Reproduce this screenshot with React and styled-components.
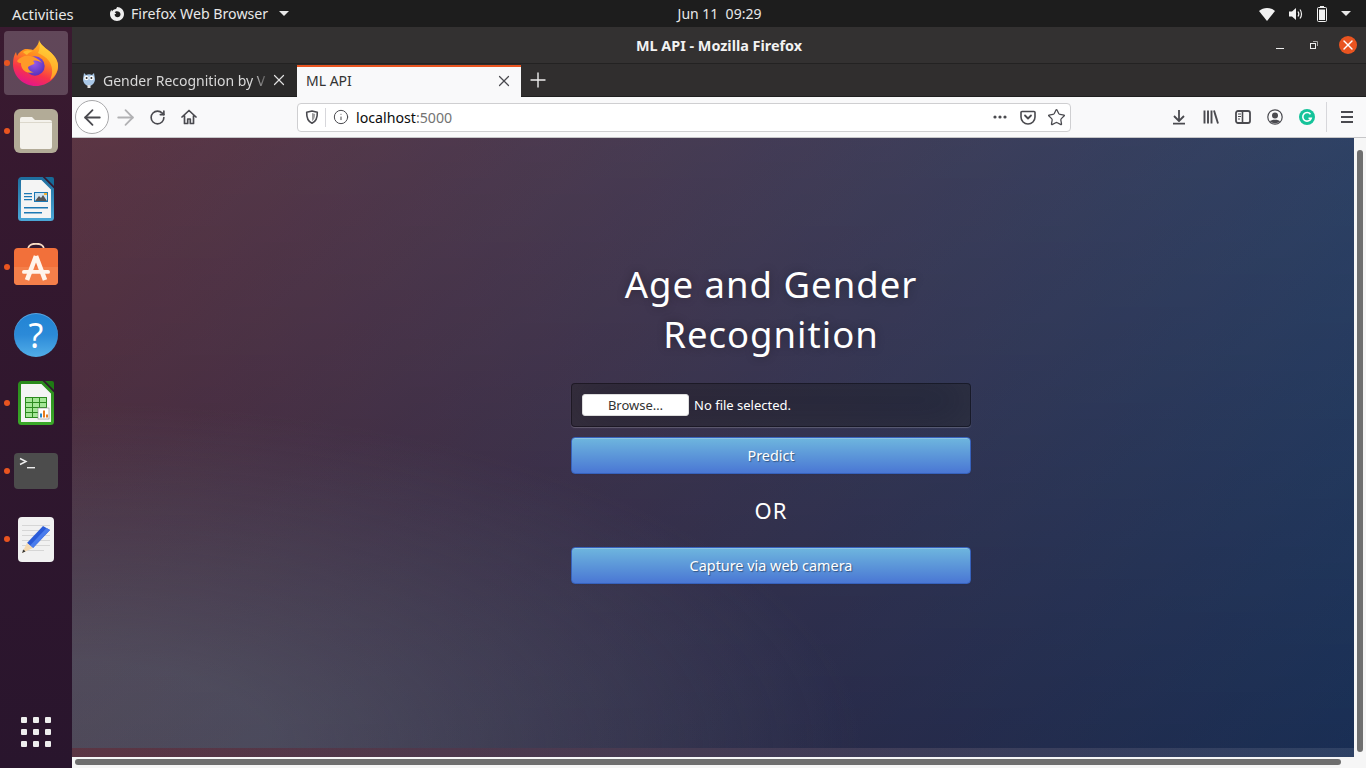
import React from 'react';
import styled, { createGlobalStyle } from 'styled-components';
import { ArrowLeft, ArrowRight, RotateCw, Info, Star, X, Plus } from 'lucide-react';

const uiFont = '"Noto Sans", "Open Sans", "DejaVu Sans", sans-serif';

const GlobalStyle = createGlobalStyle`
  html, body {
    margin: 0;
    padding: 0;
    background: #333;
    overflow: hidden;
  }
  * { box-sizing: border-box; }
`;

const Screen = styled.div`
  width: 1366px;
  height: 768px;
  display: flex;
  flex-direction: column;
  overflow: hidden;
  font-family: ${uiFont};
`;

/* gnome top bar */
const TopBar = styled.div`
  height: 27px;
  flex: none;
  background: #1d1d1d;
  color: #e8e8e8;
  font-size: 14.2px;
  display: grid;
  grid-template-columns: 677px 85px 1fr;
  align-items: center;
`;

const TopLeft = styled.div`
  display: flex;
  align-items: center;
  padding-left: 12px;
`;

const Activities = styled.span`
  width: 62px;
  font-size: 14.8px;
  white-space: nowrap;
`;

const AppMenu = styled.div`
  display: flex;
  align-items: center;
  gap: 6px;
  margin-left: 35px;
`;

const Caret = styled.span`
  width: 0;
  height: 0;
  margin-left: 5px;
  border-left: 5px solid transparent;
  border-right: 5px solid transparent;
  border-top: 5px solid #e8e8e8;
`;

const StatusCaret = styled(Caret)`
  margin-left: 1px;
`;

const Clock = styled.div`
  white-space: pre;
  text-align: center;
  font-size: 14px;
`;

const TopRight = styled.div`
  display: flex;
  align-items: center;
  justify-content: flex-end;
  gap: 13px;
  padding-right: 15px;
`;

const Desktop = styled.div`
  flex: 1;
  display: flex;
  min-height: 0;
`;

/* launcher */
const Dock = styled.div`
  width: 72px;
  flex: none;
  display: flex;
  flex-direction: column;
  padding-top: 2px;
  background: linear-gradient(180deg, #3a1a30 0%, #30172e 50%, #29152d 100%);
`;

const DockItem = styled.div`
  position: relative;
  height: 68px;
  display: flex;
  align-items: center;
  justify-content: center;

  &::before {
    content: '';
    position: absolute;
    inset: 2px 4px;
    border-radius: 4px;
    background: ${p => (p.$active ? 'rgba(255,255,255,0.2)' : 'transparent')};
  }

  &::after {
    content: '';
    position: absolute;
    left: 4px;
    top: 31px;
    width: 6px;
    height: 6px;
    border-radius: 50%;
    background: ${p => (p.$running ? '#e95420' : 'transparent')};
  }

  svg { position: relative; }
`;

const HelpBadge = styled.div`
  width: 44px;
  height: 44px;
  display: flex;
  align-items: center;
  justify-content: center;
  border-radius: 50%;
  color: #fff;
  font-size: 34px;
  line-height: 44px;
  background: linear-gradient(180deg, #2184d4 0%, #2c8ad8 50%, #52aee8 100%);
  box-shadow: inset 0 1px 0 rgba(255,255,255,.25);
`;

const AppsGrid = styled.div`
  margin-top: auto;
  margin-bottom: 21px;
  margin-left: 21px;
  display: grid;
  grid-template-columns: repeat(3, 6px);
  grid-auto-rows: 6px;
  gap: 6px;
`;

const AppsDot = styled.span`
  background: #eee;
  border-radius: 1px;
`;

/* browser window */
const Browser = styled.div`
  flex: 1;
  min-width: 0;
  display: flex;
  flex-direction: column;
`;

const TitleBar = styled.div`
  height: 37px;
  flex: none;
  position: relative;
  display: flex;
  align-items: center;
  justify-content: center;
  background: #333131;
  border-bottom: 1px solid #232222;
  color: #f2f2f2;
  font-size: 14.4px;
  font-weight: 700;
`;

const WindowButtons = styled.div`
  position: absolute;
  right: 9px;
  top: 9px;
  display: flex;
  align-items: center;
`;

const WindowButton = styled.div`
  width: 34px;
  height: 18px;
  display: flex;
  align-items: center;
  justify-content: center;
`;

const CloseButton = styled.div`
  width: 18px;
  height: 18px;
  margin-left: 8px;
  border-radius: 50%;
  background: #e95420;
  display: flex;
  align-items: center;
  justify-content: center;
`;

const TabStrip = styled.div`
  height: 33px;
  flex: none;
  display: flex;
  background: #302e2e;
  align-items: stretch;
  border-bottom: 1px solid #1f1f1f;
`;

const Tab = styled.div`
  width: ${p => p.$width}px;
  display: flex;
  align-items: center;
  padding: ${p => (p.$active ? '0 8px 3px 9px' : '0 9px 0 9px')};
  font-size: 14px;
  position: relative;
  color: ${p => (p.$active ? '#333' : '#d8d8d8')};
  background: ${p => (p.$active ? '#f9f9fa' : '#2b2a2a')};
  border-top: ${p => (p.$active ? '2px solid #e95420' : '0')};
  margin-top: ${p => (p.$active ? '1px' : '0')};
  margin-bottom: ${p => (p.$active ? '-1px' : '0')};
`;

const TabTitle = styled.span`
  flex: 1;
  min-width: 0;
  white-space: nowrap;
  margin-left: ${p => p.$indent || 0}px;
  mask-image: ${p => (p.$fade ? 'linear-gradient(90deg, #000 150px, rgba(0,0,0,.25) 163px)' : 'none')};
`;

const NewTab = styled.div`
  width: 34px;
  display: flex;
  align-items: center;
  justify-content: center;
`;

const Toolbar = styled.div`
  height: 41px;
  flex: none;
  display: flex;
  align-items: center;
  padding-left: 3px;
  background: #f9f9fa;
  border-bottom: 1px solid #c6c6c8;
  color: #4a4a4f;
`;

const ToolButton = styled.div`
  width: 32px;
  height: 32px;
  flex: none;
  display: flex;
  align-items: center;
  justify-content: center;
  color: ${p => (p.$disabled ? '#b1b1b3' : '#4a4a4f')};
`;

const BackButton = styled(ToolButton)`
  width: 34px;
  height: 34px;
  border-radius: 50%;
  background: #fff;
  border: 1px solid #a8a8aa;
`;

const UrlBar = styled.div`
  width: 774px;
  height: 29px;
  margin-left: 92px;
  flex: none;
  display: flex;
  align-items: center;
  background: #fff;
  border: 1px solid #cfcfd1;
  border-radius: 4px;
  font-size: 14.2px;
  color: #0c0c0d;
`;

const UrlIcon = styled.div`
  width: ${p => p.$width || 28}px;
  height: 100%;
  flex: none;
  display: flex;
  align-items: center;
  justify-content: center;
  color: #4a4a4f;
`;

const UrlDivider = styled.span`
  width: 1px;
  height: 19px;
  background: #d7d7db;
`;

const UrlText = styled.div`
  flex: 1;
  padding-left: 1px;
`;

const UrlPort = styled.span`
  color: #737373;
`;

const ToolRight = styled.div`
  margin-left: auto;
  display: flex;
  align-items: center;
  padding-right: 3px;
`;

const ToolDivider = styled.span`
  width: 1px;
  height: 30px;
  margin: 0 4px 0 3px;
  background: #d7d7db;
`;

/* page viewport with its two scrollbars */
const Viewport = styled.div`
  flex: 1;
  min-height: 0;
  display: grid;
  grid-template-columns: 1fr 12px;
  grid-template-rows: 1fr 11px;
  background: #f6f6f6;
`;

const PageClip = styled.div`
  overflow: hidden;
  min-width: 0;
  min-height: 0;
`;

const Page = styled.div`
  width: 1398px;
  height: 619px;
  padding-top: 121px;
  background:
    radial-gradient(ellipse farthest-corner at 0% 100%, rgba(104,128,138,.4) 10%, rgba(138,114,76,0) 40%),
    linear-gradient(to bottom, rgba(57,173,219,.25) 0%, rgba(42,60,87,.4) 100%),
    linear-gradient(135deg, #670d10 0%, #092756 100%);
  background-size: 1398px 610px;
`;

const Login = styled.div`
  width: 400px;
  margin: 0 auto;
  display: flex;
  flex-direction: column;
`;

const Heading = styled.h1`
  margin: 0 0 24px;
  color: #fff;
  font-size: 36.5px;
  font-weight: 400;
  line-height: 50px;
  letter-spacing: 1px;
  text-align: center;
  text-shadow: 0 0 10px rgba(0,0,0,.3);
`;

const FileBox = styled.div`
  height: 44px;
  margin-bottom: 10px;
  padding: 0 10px;
  display: flex;
  align-items: center;
  gap: 5px;
  color: #fff;
  font-size: 13px;
  background: rgba(0,0,0,.3);
  border: 1px solid rgba(0,0,0,.3);
  border-radius: 4px;
  box-shadow: inset 0 -5px 45px rgba(100,100,100,.2), 0 1px 1px rgba(255,255,255,.2);
`;

const BrowseButton = styled.div`
  width: 107px;
  height: 22px;
  display: flex;
  align-items: center;
  justify-content: center;
  color: #333;
  background: #fff;
  border: 1px solid #ddd;
  border-radius: 3px;
`;

const PrimaryButton = styled.div`
  height: 37px;
  display: flex;
  align-items: center;
  justify-content: center;
  color: #fff;
  font-size: 14.4px;
  text-shadow: 1px 1px 1px rgba(0,0,0,.4);
  background: linear-gradient(to bottom, #6eb6de, #4a77d4);
  border: 1px solid #3762bc;
  border-radius: 4px;
  box-shadow: inset 0 1px 0 rgba(255,255,255,.2), 0 1px 2px rgba(0,0,0,.05);
`;

const OrLabel = styled.div`
  height: 73px;
  padding-bottom: 2px;
  display: flex;
  align-items: center;
  justify-content: center;
  color: #fff;
  font-size: 22px;
  letter-spacing: 1px;
`;

const ScrollTrackV = styled.div`
  padding: 12px 3px 5px;
`;

const ScrollTrackH = styled.div`
  padding: 2px 13px 3px 3px;
`;

const ScrollThumb = styled.div`
  width: 100%;
  height: 100%;
  border-radius: 3px;
  background: #6f6f6f;
`;

const ScrollCorner = styled.div``;

/* icons */
const Svg = ({ size = 16, children, ...rest }) => (
  <svg width={size} height={size} viewBox="0 0 16 16" fill="none" {...rest}>{children}</svg>
);

const FirefoxLogo = () => (
  <svg width="46" height="46" viewBox="0 0 46 46">
    <defs>
      <linearGradient id="ffBody" x1="0.75" y1="0" x2="0.35" y2="1">
        <stop offset="0" stopColor="#ffc42e" />
        <stop offset="0.4" stopColor="#ff8a1f" />
        <stop offset="0.72" stopColor="#f8344a" />
        <stop offset="1" stopColor="#e3148e" />
      </linearGradient>
      <linearGradient id="ffSide" x1="0.5" y1="0" x2="0.3" y2="1">
        <stop offset="0" stopColor="#ffd83d" />
        <stop offset="1" stopColor="#ff9a20" />
      </linearGradient>
      <radialGradient id="ffGlobe" cx="0.45" cy="0.35" r="0.75">
        <stop offset="0" stopColor="#9a5ce8" />
        <stop offset="1" stopColor="#4f2bb5" />
      </radialGradient>
    </defs>
    <path d="M26 0c1 4 5 7 10 11 5 4 9 9 9 15 0 11-10 20-22 20C10 46 0 36 0 24c0-5 1-9 3-12l1 4c2-4 5-6 8-7 3 0 6 0 8 1 4-3 6-7 6-10z" fill="url(#ffBody)" />
    <path d="M26 0c1 4 5 7 10 11 5 4 9 9 9 15 0 5-3 11-8 14 3-6 3-13-1-19-3-4-7-6-11-8 2-3 2-9 1-13z" fill="url(#ffSide)" />
    <circle cx="22" cy="26" r="9.700" fill="url(#ffGlobe)" />
    <path d="M4 21c3-4 8-6 13-5 5 1 10 4 12 7-3-2-6-3-9-2 1 1 2 2 1 3-2 1-5 2-6 3 0 3 3 5 6 5-5 2-10 0-12-4-1-2-1-4-1-5-1 0-3 0-4-2z" fill="#ff9a28" />
    <path d="M10 12c3-2 7-2 10-1-3 1-5 2-6 4-2-1-3-2-4-3z" fill="#ffb92e" />
  </svg>
);

const FilesIcon = () => (
  <svg width="44" height="44" viewBox="0 0 44 44">
    <rect width="44" height="44" rx="6" fill="#b2ab97" />
    <path d="M6 10a2 2 0 0 1 2-2h10l3 3h15a2 2 0 0 1 2 2v25a2 2 0 0 1-2 2H8a2 2 0 0 1-2-2z" fill="#f4f2ec" />
    <rect x="6" y="13" width="32" height="1" fill="#dcd8cc" />
  </svg>
);

const DocShape = ({ id, top, bottom, fold, children }) => (
  <svg width="36" height="44" viewBox="0 0 36 44">
    <defs>
      <linearGradient id={id} x1="0" y1="0" x2="0" y2="1">
        <stop offset="0" stopColor={top} />
        <stop offset="1" stopColor={bottom} />
      </linearGradient>
    </defs>
    <path d="M3.500 1.500h20.500l10.500 10.500v28.500a2 2 0 0 1-2 2H3.500a2 2 0 0 1-2-2V3.500a2 2 0 0 1 2-2z" fill="#f4f4f4" stroke={`url(#${id})`} strokeWidth="3" />
    <path d="M27 0h7a2 2 0 0 1 2 2v7z" fill={fold} />
    {children}
  </svg>
);

const WriterIcon = () => (
  <DocShape id="writerEdge" top="#1f6f9f" bottom="#4aa6d6" fold="#176a98">
    <path d="M6 16h8v1.300H6zM6 19h8v1.300H6zM6 22h8v1.300H6zM6 30h24v1.600H6zM6 35h18v1.600H6z" fill="#1c78b4" />
    <rect x="16.500" y="15.500" width="13" height="9" fill="#cfe3f0" stroke="#1c78b4" />
    <path d="M17 24l4-5 2 2 2-3 4 6z" fill="#555" />
    <rect x="26" y="16" width="3" height="2" fill="#f0b030" />
  </DocShape>
);

const CalcIcon = () => (
  <DocShape id="calcEdge" top="#2a8a1c" bottom="#3aa828" fold="#1f7a14">
    <rect x="7.500" y="16.500" width="21" height="20" fill="#a4e696" stroke="#2b8a1e" />
    <path d="M7 21.500h21M7 26.500h21M7 31.500h21M14.500 16v20M21.500 16v20" stroke="#2b8a1e" />
    <rect x="20" y="27" width="11" height="11" fill="#fff" stroke="#888" strokeWidth="0.6" />
    <path d="M25 36.500v-7h2v7zM28 36.500v-3h2v3z" fill="#e77c1e" />
    <path d="M22 36.500v-4h2v4z" fill="#2b88c8" />
  </DocShape>
);

const StoreIcon = () => (
  <svg width="44" height="48" viewBox="0 0 44 48">
    <path d="M14 7V6c0-7 16-7 16 0v1" fill="none" stroke="#f9dcc4" strokeWidth="2" />
    <rect y="5" width="44" height="37" rx="4" fill="#f2703a" />
    <path d="M0 24h44v14a4 4 0 0 1-4 4H4a4 4 0 0 1-4-4z" fill="#f47f4a" />
    <path d="M22 13L13 37M22 13l9 24" stroke="#fff4ec" strokeWidth="4.600" />
    <rect x="8" y="27" width="28" height="3.800" rx="1.900" fill="#fff4ec" />
  </svg>
);

const TerminalIcon = () => (
  <svg width="44" height="36" viewBox="0 0 44 36">
    <rect width="44" height="36" rx="4" fill="#4c4c4c" />
    <path d="M6 5.500l6 3-6 3" fill="none" stroke="#eee" strokeWidth="1.400" />
    <rect x="13" y="14" width="8" height="1.400" fill="#eee" />
  </svg>
);

const GeditIcon = () => (
  <svg width="36" height="45" viewBox="0 0 36 45">
    <rect width="36" height="45" rx="4" fill="#f1f1f1" />
    <path d="M4 8.500h28M4 13.500h28M4 18.500h28M4 23.500h28M4 28.500h28M4 33.500h22" stroke="#d6d6d6" />
    <path d="M32 13L25 9 9 26l6 5z" fill="#2a5bd8" />
    <path d="M32 13L15 31l-3-2.500L28.500 11z" fill="#4a7cec" />
    <path d="M9 26l6 5-11 5z" fill="#f4d9b0" />
    <path d="M4 36l1.500-3.500 2 2z" fill="#333" />
  </svg>
);

const OwlFavicon = () => (
  <svg width="16" height="16" viewBox="0 0 16 16">
    <path d="M3 1l2 2c2-1 4-1 6 0l2-2 1 6c0 4-3 7-6 7s-6-3-6-7z" fill="#a9c7e6" />
    <circle cx="5.400" cy="6" r="2.300" fill="#fff" />
    <circle cx="10.600" cy="6" r="2.300" fill="#fff" />
    <circle cx="5.600" cy="6" r="1" fill="#333" />
    <circle cx="10.400" cy="6" r="1" fill="#333" />
    <rect x="6.500" y="13" width="3" height="3" fill="#ddd" />
  </svg>
);

const MiniFirefox = () => (
  <Svg size={16}>
    <path d="M8 1c3.900 0 7 3.100 7 7s-3.100 7-7 7-7-3.100-7-7c0-1.600.5-3 1.400-4.200L3 5.500C3.700 4 5.300 3 7 3c.6-.6.8-1.300 1-2zM8 5.300c-1 0-1.800.5-2.300 1.200 1 .2 1.500.6 1.500 1.100-.5.3-1.200.4-1.700.9.2 1.600 1.400 2.700 3 2.700 1.700 0 3-1.300 3-3S9.700 5.300 8 5.300z" fill="#eee" fillRule="evenodd" />
  </Svg>
);

const WifiIcon = () => (
  <Svg size={16}>
    <path d="M0 5c4.500-4 11.500-4 16 0l-8 10z" fill="#f2f2f2" />
  </Svg>
);

const VolumeIcon = () => (
  <Svg size={16}>
    <path d="M1 5.500h3L8 2v12L4 10.500H1z" fill="#f2f2f2" />
    <path d="M10 5.500c1 1.500 1 3.500 0 5M12 3.500c2 2.500 2 6.500 0 9" stroke="#f2f2f2" strokeWidth="1.200" />
  </Svg>
);

const BatteryIcon = () => (
  <svg width="10" height="16" viewBox="0 0 10 16">
    <rect x="3" y="0" width="4" height="2" fill="#f2f2f2" />
    <rect x="0.500" y="1.500" width="9" height="14" rx="1" fill="none" stroke="#f2f2f2" />
    <rect x="2" y="3.500" width="6" height="10.500" fill="#f2f2f2" />
  </svg>
);

const ShieldIcon = () => (
  <Svg size={16}>
    <path d="M8 2l5.300 1.200c.2 4.800-1.100 9.100-5.300 11.100-4.200-2-5.500-6.300-5.300-11.100z" stroke="currentColor" strokeWidth="1.600" strokeLinejoin="round" />
    <path d="M8 4v8.200c2-1.300 3-3.900 3.100-7.300z" fill="currentColor" opacity="0.55" />
  </Svg>
);

const HomeIcon = () => (
  <Svg size={16}>
    <path d="M1 8l7-6.500L15 8M3.500 6.500V14.500h3.200V10h2.600v4.500h3.200V6.500" stroke="currentColor" strokeWidth="1.700" strokeLinejoin="round" strokeLinecap="round" />
  </Svg>
);

const PocketIcon = () => (
  <Svg size={16}>
    <path d="M2 2.500h12a1 1 0 0 1 1 1V8a7 7 0 0 1-14 0V3.500a1 1 0 0 1 1-1z" stroke="currentColor" strokeWidth="1.600" />
    <path d="M5 6.500l3 3 3-3" stroke="currentColor" strokeWidth="1.800" strokeLinecap="round" strokeLinejoin="round" />
  </Svg>
);

const DotsIcon = () => (
  <Svg size={16}>
    <circle cx="3" cy="8" r="1.600" fill="currentColor" />
    <circle cx="8" cy="8" r="1.600" fill="currentColor" />
    <circle cx="13" cy="8" r="1.600" fill="currentColor" />
  </Svg>
);

const DownloadIcon = () => (
  <Svg size={16}>
    <path d="M8 1v11M3 7l5 5 5-5M2 14.700h12" stroke="currentColor" strokeWidth="1.800" strokeLinejoin="round" />
  </Svg>
);

const LibraryIcon = () => (
  <Svg size={16}>
    <path d="M1.500 1.500v13M5 1.500v13M8.500 1.500v13" stroke="currentColor" strokeWidth="1.900" />
    <path d="M11 1.500l4 13" stroke="currentColor" strokeWidth="1.900" />
  </Svg>
);

const SidebarIcon = () => (
  <Svg size={16}>
    <rect x="1" y="2" width="14" height="12" rx="2" stroke="currentColor" strokeWidth="1.800" />
    <path d="M7.500 2v12" stroke="currentColor" strokeWidth="1.600" />
    <path d="M3 5h3M3 7.500h3M3 10h2" stroke="currentColor" />
  </Svg>
);

const AccountIcon = () => (
  <Svg size={16}>
    <circle cx="8" cy="8" r="7.200" stroke="currentColor" strokeWidth="1.200" />
    <circle cx="8" cy="6.500" r="3" fill="currentColor" />
    <path d="M3 12.500c1-2.500 9-2.500 10 0-2.500 2.200-7.500 2.200-10 0z" fill="currentColor" />
  </Svg>
);

const GrammarlyIcon = () => (
  <Svg size={16}>
    <circle cx="8" cy="8" r="8" fill="#15c39a" />
    <path d="M11.500 5.200A4.300 4.300 0 1 0 12.200 9.200H9.500" stroke="#fff" strokeWidth="1.600" />
  </Svg>
);

const MenuIcon = () => (
  <Svg size={16}>
    <path d="M2 3h12M2 8h12M2 13h12" stroke="currentColor" strokeWidth="1.800" />
  </Svg>
);

const App = () => (
  <Screen>
    <GlobalStyle />
    <TopBar>
      <TopLeft>
        <Activities>Activities</Activities>
        <AppMenu>
          <MiniFirefox />
          Firefox Web Browser
          <Caret />
        </AppMenu>
      </TopLeft>
      <Clock>{'Jun 11  09:29'}</Clock>
      <TopRight>
        <WifiIcon />
        <VolumeIcon />
        <BatteryIcon />
        <StatusCaret />
      </TopRight>
    </TopBar>
    <Desktop>
      <Dock>
        <DockItem $active $running><FirefoxLogo /></DockItem>
        <DockItem $running><FilesIcon /></DockItem>
        <DockItem><WriterIcon /></DockItem>
        <DockItem $running><StoreIcon /></DockItem>
        <DockItem><HelpBadge>?</HelpBadge></DockItem>
        <DockItem $running><CalcIcon /></DockItem>
        <DockItem $running><TerminalIcon /></DockItem>
        <DockItem $running><GeditIcon /></DockItem>
        <AppsGrid>
          {Array.from({ length: 9 }).map((_, i) => <AppsDot key={i} />)}
        </AppsGrid>
      </Dock>
      <Browser>
        <TitleBar>
          ML API - Mozilla Firefox
          <WindowButtons>
            <WindowButton>
              <svg width="8" height="8" viewBox="0 0 8 8"><path d="M0 7.500h8" stroke="#eee" /></svg>
            </WindowButton>
            <WindowButton>
              <svg width="8" height="8" viewBox="0 0 8 8">
                <rect x="0.500" y="2.500" width="5" height="5" fill="none" stroke="#eee" />
                <path d="M3 .5h4.500V5" fill="none" stroke="#aaa" />
              </svg>
            </WindowButton>
            <CloseButton><X size={16} color="#fff" strokeWidth={2} /></CloseButton>
          </WindowButtons>
        </TitleBar>
        <TabStrip>
          <Tab $width={225}>
            <OwlFavicon />
            <TabTitle $indent={6} $fade>Gender Recognition by V</TabTitle>
            <X size={18} color="#e0e0e0" strokeWidth={1.6} />
          </Tab>
          <Tab $width={224} $active>
            <TabTitle>ML API</TabTitle>
            <X size={18} color="#4a4a4f" strokeWidth={1.6} />
          </Tab>
          <NewTab><Plus size={24} color="#eee" strokeWidth={1.4} /></NewTab>
        </TabStrip>
        <Toolbar>
          <BackButton><ArrowLeft size={25} strokeWidth={1.7} /></BackButton>
          <ToolButton $disabled><ArrowRight size={25} strokeWidth={1.7} /></ToolButton>
          <ToolButton><RotateCw size={17} strokeWidth={2.3} /></ToolButton>
          <ToolButton><HomeIcon /></ToolButton>
          <UrlBar>
            <UrlIcon $width={27}><ShieldIcon /></UrlIcon>
            <UrlDivider />
            <UrlIcon $width={29}><Info size={16} strokeWidth={1.5} /></UrlIcon>
            <UrlText>localhost<UrlPort>:5000</UrlPort></UrlText>
            <UrlIcon><DotsIcon /></UrlIcon>
            <UrlIcon><PocketIcon /></UrlIcon>
            <UrlIcon><Star size={19} strokeWidth={1.6} /></UrlIcon>
          </UrlBar>
          <ToolRight>
            <ToolButton><DownloadIcon /></ToolButton>
            <ToolButton><LibraryIcon /></ToolButton>
            <ToolButton><SidebarIcon /></ToolButton>
            <ToolButton><AccountIcon /></ToolButton>
            <ToolButton><GrammarlyIcon /></ToolButton>
            <ToolDivider />
            <ToolButton><MenuIcon /></ToolButton>
          </ToolRight>
        </Toolbar>
        <Viewport>
          <PageClip>
            <Page>
              <Login>
                <Heading>Age and Gender Recognition</Heading>
                <FileBox>
                  <BrowseButton>Browse…</BrowseButton>
                  No file selected.
                </FileBox>
                <PrimaryButton>Predict</PrimaryButton>
                <OrLabel>OR</OrLabel>
                <PrimaryButton>Capture via web camera</PrimaryButton>
              </Login>
            </Page>
          </PageClip>
          <ScrollTrackV><ScrollThumb /></ScrollTrackV>
          <ScrollTrackH><ScrollThumb /></ScrollTrackH>
          <ScrollCorner />
        </Viewport>
      </Browser>
    </Desktop>
  </Screen>
);

export default App;
